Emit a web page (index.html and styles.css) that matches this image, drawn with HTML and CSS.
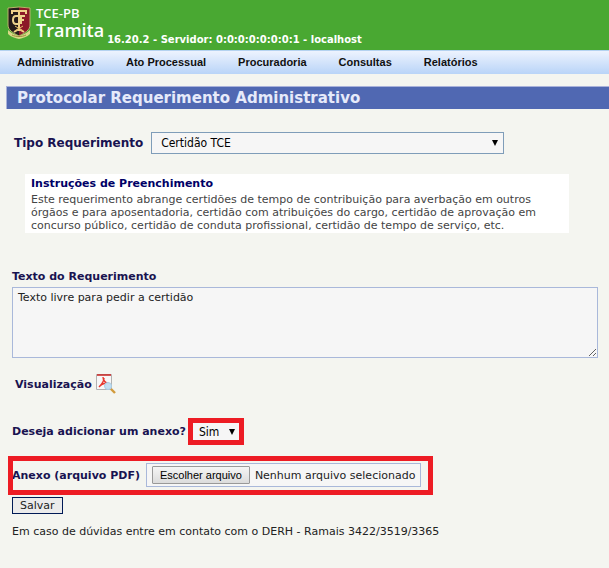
FILE: index.html
```
<!DOCTYPE html>
<html lang="pt-BR">
	<head>
		<meta charset="UTF-8">
		<title>TCE-PB Tramita</title>
		<link rel="stylesheet" href="styles.css">
	</head>
	<body>
		<header class="topo">
			<svg class="brasao" width="24" height="34" viewBox="0 0 24 34">
				<path d="M1 2l11-1 11 1v17c0 5-5 8-11 11C6 27 1 24 1 19z" fill="#251b1a"/>
				<path d="M12 1l11 1v17c0 5-5 8-11 11z" fill="#8c1828"/>
				<path d="M1 2l11-1 11 1v17c0 5-5 8-11 11C6 27 1 24 1 19z" fill="none" stroke="#b9b36a" stroke-width="1"/>
				<path d="M5 8V5h14v3M12 4v21M7 26l5-3 5 3" fill="none" stroke="#f0d08a" stroke-width="2"/>
				<path d="M12 10H9c-3 0-3 2-3 4s0 4 3 4h3M18 10h-4v8M14 14h3" fill="none" stroke="#ecd28c" stroke-width="2"/>
				<path d="M8 20l8 5M16 20l-8 5" stroke="#e5c067" stroke-width="1"/>
				<path d="M1 24c3 3 7 5 11 6 4-1 8-3 11-6v4c-3 3-7 4-11 5-4-1-8-2-11-5z" fill="#d9d886"/>
				<path d="M5 29c4 2 10 2 14 0" fill="none" stroke="#9a8f3c" stroke-width="1"/>
			</svg>
			<div class="marca">
				<span class="orgao">TCE-PB</span>
				<span class="sistema">Tramita</span>
			</div>
			<span class="versao">16.20.2 - Servidor: 0:0:0:0:0:0:0:1 - localhost</span>
		</header>
		<nav class="menu">
			<a href="#">Administrativo</a>
			<a href="#">Ato Processual</a>
			<a href="#">Procuradoria</a>
			<a href="#">Consultas</a>
			<a href="#">Relatórios</a>
		</nav>
		<h1 class="titulo">Protocolar Requerimento Administrativo</h1>
		<form class="form">
			<div class="linha tipo">
				<label for="tipo">Tipo Requerimento</label>
				<span class="combo">
					<select id="tipo"><option>Certidão TCE</option></select>
				</span>
			</div>
			<div class="instrucoes">
				<h2>Instruções de Preenchimento</h2>
				<p>Este requerimento abrange certidões de tempo de contribuição para averbação em outros órgãos e para aposentadoria, certidão com atribuições do cargo, certidão de aprovação em concurso público, certidão de conduta profissional, certidão de tempo de serviço, etc.</p>
			</div>
			<label class="rotulo" for="texto">Texto do Requerimento</label>
			<textarea id="texto">Texto livre para pedir a certidão</textarea>
			<div class="linha visualizacao">
				<span>Visualização</span>
				<a href="#" aria-label="Visualizar PDF">
					<svg width="20" height="20" viewBox="0 0 20 20">
						<path d="M.5 .5h15v15H.5z" fill="#f7f7f7" stroke="#b2b2b2"/>
						<path d="M1 1h14" stroke="#c9211e" stroke-width="1.5"/>
						<path d="M7 3c0 4 2 6 7 7M8 4c0 3-2 6-5 9M4 12c2-2 5-3 8-3" fill="none" stroke="#e8382f" stroke-width="1.4"/>
						<circle cx="12" cy="12" r="3.5" fill="#c3dff2" stroke="#a9cde4"/>
						<path d="M15 15l4 4" stroke="#d19a3c" stroke-width="2.4"/>
					</svg>
				</a>
			</div>
			<div class="linha pergunta">
				<label for="anexar">Deseja adicionar um anexo?</label>
				<span class="combo curto destaque">
					<select id="anexar"><option>Sim</option><option>Não</option></select>
				</span>
			</div>
			<div class="linha anexo destaque">
				<label for="arquivo">Anexo (arquivo PDF)</label>
				<div class="arquivo">
					<input type="file" id="arquivo" accept=".pdf" hidden>
					<button type="button" id="escolher">Escolher arquivo</button>
					<span id="nome">Nenhum arquivo selecionado</span>
				</div>
			</div>
			<button type="submit" class="salvar">Salvar</button>
			<p class="contato">Em caso de dúvidas entre em contato com o DERH - Ramais 3422/3519/3365</p>
		</form>
		<script>
			var oArquivo = document.getElementById('arquivo');
			var oNome = document.getElementById('nome');
			document.getElementById('escolher').onclick = function(){
				oArquivo.click();
			}
			oArquivo.onchange = function(){
				oNome.textContent = oArquivo.files.length ? oArquivo.files[0].name : "Nenhum arquivo selecionado";
			}
		</script>
	</body>
</html>
```
FILE: styles.css
```
*{
	margin: 0;
	padding: 0;
	box-sizing: border-box;
}
body{
	background: #f4f5f0;
	font: 11px/13px Verdana, "DejaVu Sans", sans-serif;
	color: #222;
}
.topo{
	display: flex;
	height: 50px;
	padding: 6px 7px 0;
	background: #49a832;
	color: #fff;
}
.marca{
	display: flex;
	flex-direction: column;
	padding-left: 5px;
	font-family: "Open Sans", "Noto Sans", sans-serif;
	font-weight: 600;
}
.orgao{
	font-size: 13px;
	line-height: 15px;
}
.sistema{
	font-size: 18px;
	line-height: 19px;
}
.versao{
	align-self: flex-end;
	padding: 0 0 4px 3px;
	font-size: 10px;
	font-weight: bold;
}
.menu{
	display: flex;
	gap: 32px;
	height: 24px;
	padding: 0 17px;
	border-top: 1px solid #b4d2f0;
	background: linear-gradient(#edf3fe, #b9d4f8);
}
.menu a{
	font: bold 11px/23px Arial, "Liberation Sans", sans-serif;
	color: #111;
	text-decoration: none;
}
.titulo{
	height: 23px;
	margin: 12px 0 0 6px;
	padding-left: 10px;
	border: solid #a9b2da;
	border-width: 1px 0 0 1px;
	background: #5068b2;
	color: #e6eafa;
	font-size: 15px;
	line-height: 23px;
}
.form{
	padding: 23px 11px 20px 12px;
}
.linha{
	display: flex;
	align-items: center;
	font-weight: bold;
	color: #191350;
}
.tipo{
	gap: 8px;
	padding-left: 2px;
	font-size: 12px;
}
.combo{
	position: relative;
	display: block;
}
.combo::after{
	content: "";
	position: absolute;
	top: 8px;
	right: 6px;
	border: solid transparent;
	border-width: 6px 3px 0;
	border-top-color: #000;
	pointer-events: none;
}
.combo select{
	display: block;
	width: 100%;
	height: 22px;
	padding-left: 9px;
	border: 1px solid #7f9db9;
	border-radius: 0;
	background: #f6f6f6;
	color: #000;
	font: 12px Tahoma, "DejaVu Sans Condensed", sans-serif;
	appearance: none;
}
.tipo .combo{
	width: 62%;
	max-width: 353px;
}
.instrucoes{
	margin: 20px 29px 0 13px;
	padding: 3px 6px 1px;
	background: #fff;
	color: #444;
}
.instrucoes h2{
	margin-bottom: 3px;
	font-size: 11px;
	color: #000066;
}
.rotulo{
	display: block;
	margin: 37px 0 4px;
	font-weight: bold;
	color: #191350;
}
textarea{
	display: block;
	width: 100%;
	height: 71px;
	padding: 3px 5px;
	border: 1px solid #a9b8da;
	background: #f6f6f6;
	color: #222;
	font: inherit;
}
.visualizacao{
	gap: 4px;
	margin-top: 16px;
	padding-left: 3px;
}
.visualizacao a, .visualizacao svg{
	display: block;
}
.pergunta{
	gap: 7px;
	margin-top: 29px;
}
.curto{
	width: 46px;
}
.curto select{
	height: 17px;
	padding-left: 6px;
	border: none;
}
.curto::after{
	top: 6px;
	right: 4px;
}
.destaque{
	position: relative;
}
.destaque::before{
	content: "";
	position: absolute;
	inset: -5px;
	border: 5px solid #ed1c24;
	pointer-events: none;
}
.anexo{
	gap: 6px;
	width: fit-content;
	margin-top: 23px;
}
.anexo::before{
	inset: -7px -12px -8px -4px;
}
.arquivo{
	display: flex;
	align-items: center;
	gap: 5px;
	height: 24px;
	padding: 0 5px;
	border: 1px solid #a9b8da;
	background: #f6f6f6;
	font-weight: normal;
	color: #222;
}
.arquivo button{
	height: 18px;
	padding: 0 7px;
	border: 1px solid #999;
	border-radius: 1px;
	background: linear-gradient(#f5f5f5, #dcdcdc);
	font: 11px Arial, "Liberation Sans", sans-serif;
}
.salvar{
	display: block;
	height: 17px;
	margin-top: 10px;
	padding: 0 7px;
	border: 1px solid #001a56;
	background: #ebebeb;
	color: #222;
	font: inherit;
}
.contato{
	margin-top: 11px;
}
```
